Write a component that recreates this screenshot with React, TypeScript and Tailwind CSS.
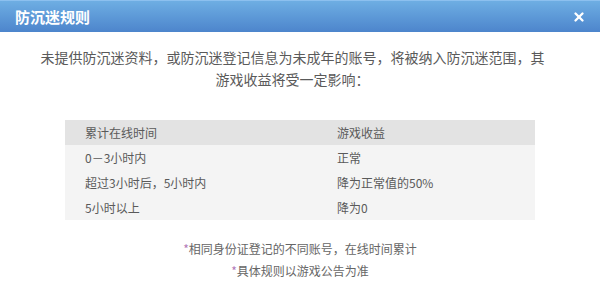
import { X } from 'lucide-react';

const rows = [
    ['0－3小时内', '正常'],
    ['超过3小时后，5小时内', '降为正常值的50%'],
    ['5小时以上', '降为0'],
];

export default function App() {
    return (
        <div
            className="w-[600px] h-[300px] bg-white overflow-hidden"
            style={{ fontFamily: '"Noto Sans CJK SC", "Liberation Sans", sans-serif' }}
        >
            {/* Title bar */}
            <div className="h-[32px] flex items-center justify-between pl-[15px] pr-[14px] bg-gradient-to-b from-[#6eaee3] to-[#4d85cc] border-t border-[#8cc0ef]">
                <span className="text-white text-[15px] font-bold leading-none">防沉迷规则</span>
                <X className="w-[14px] h-[14px] text-white" strokeWidth={4} />
            </div>

            {/* Intro */}
            <p className="pt-[14px] pl-[30px] pr-[45px] text-center text-[14px] leading-[22px] text-[#5a5a5a]">
                未提供防沉迷资料，或防沉迷登记信息为未成年的账号，将被纳入防沉迷范围，其
                <br />
                游戏收益将受一定影响：
            </p>

            {/* Table */}
            <div className="mt-[30px] mx-[65px] text-[12px] text-[#5a5a5a]">
                <div className="flex h-[25px] items-center bg-[#e3e3e3]">
                    <div className="w-[272px] pl-[20px]">累计在线时间</div>
                    <div className="flex-1">游戏收益</div>
                </div>
                <div className="bg-[#f4f4f4]">
                    {rows.map(([time, gain]) => (
                        <div key={time} className="flex h-[25px] items-center">
                            <div className="w-[272px] pl-[20px]">{time}</div>
                            <div className="flex-1">{gain}</div>
                        </div>
                    ))}
                </div>
            </div>

            {/* Notes */}
            <div className="mt-[18px] text-center text-[12px] leading-[22px] text-[#666]">
                <div><span className="text-[#b07ab8]">*</span>相同身份证登记的不同账号，在线时间累计</div>
                <div><span className="text-[#b07ab8]">*</span>具体规则以游戏公告为准</div>
            </div>
        </div>
    );
}
